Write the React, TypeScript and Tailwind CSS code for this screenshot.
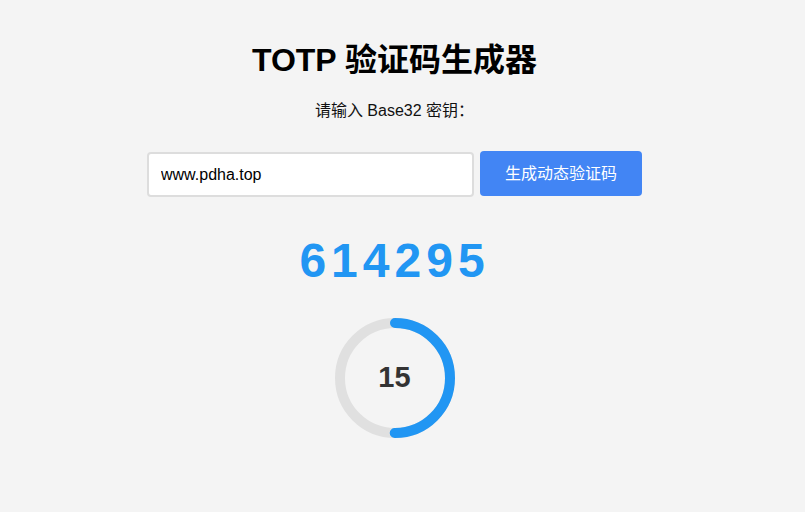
import { useState } from 'react';

const font = { fontFamily: '"Liberation Sans", Arial, "Noto Sans CJK SC", sans-serif' };

const CountdownRing = ({ seconds, period }: { seconds: number; period: number }) => {
  const r = 55;
  const circumference = 2 * Math.PI * r;
  const offset = circumference * (1 - seconds / period);
  return (
    <div className="relative w-[120px] h-[120px]">
      <svg width="120" height="120" viewBox="0 0 120 120" className="-rotate-90">
        <circle cx="60" cy="60" r={r} fill="none" stroke="#e0e0e0" strokeWidth="10" />
        <circle
          cx="60"
          cy="60"
          r={r}
          fill="none"
          stroke="#2196f3"
          strokeWidth="10"
          strokeLinecap="round"
          strokeDasharray={circumference}
          style={{ strokeDashoffset: offset }}
        />
      </svg>
      <div className="absolute inset-0 flex items-center justify-center text-[29px] font-bold text-[#333]">
        {seconds}
      </div>
    </div>
  );
};

export default function App() {
  const [secret, setSecret] = useState('www.pdha.top');

  return (
    <div className="min-h-[512px] w-full bg-[#f4f4f4]" style={font}>
      <div className="w-[789px] flex flex-col items-center">
        <h1 className="mt-[42px] text-[32px] leading-[37px] font-bold text-black">TOTP 验证码生成器</h1>
        <p className="mt-[23px] text-[16px] leading-[18px] text-[#111]">请输入 Base32 密钥：</p>

        <div className="mt-[32px] flex items-center gap-[6px]">
          <input
            value={secret}
            onChange={(e) => setSecret(e.target.value)}
            className="w-[327px] h-[45px] px-[12px] bg-white border-2 border-[#dddddd] rounded-[4px] text-[16px] text-black outline-none"
            style={font}
          />
          <button className="w-[162px] h-[45px] bg-[#4285f4] text-white text-[16px] rounded-[4px] -mt-[2px]">
            生成动态验证码
          </button>
        </div>

        <div className="mt-[36px] text-[48px] leading-[55px] font-bold text-[#2196f3] tracking-[5px]">
          614295
        </div>

        <div className="mt-[30px]">
          <CountdownRing seconds={15} period={30} />
        </div>
      </div>
    </div>
  );
}
